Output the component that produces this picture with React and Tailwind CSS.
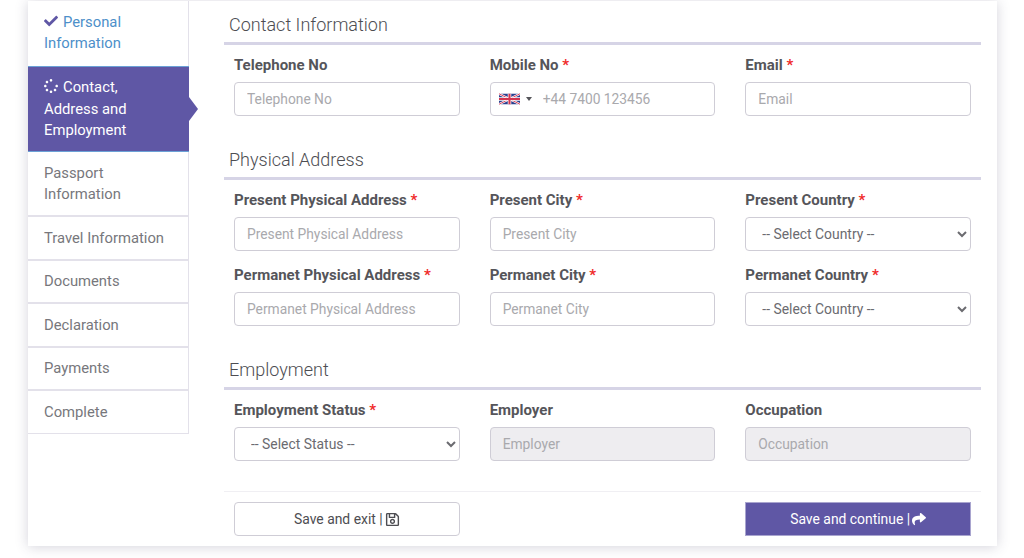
import { FaCheck, FaRegSave, FaShare, FaSpinner } from 'react-icons/fa';

const inputCls = 'w-full h-[34px] rounded border border-[#cfcdd6] px-3 text-[13.8px] text-[#55555a] placeholder:text-[#a9a9ad] outline-none';
const selectCls = 'w-full h-[34px] rounded border border-[#cfcdd6] bg-white px-3 text-[13.9px] text-[#6b6b70] outline-none';

function Flag() {
  return (
    <svg width="21" height="12" viewBox="0 0 60 30" className="shrink-0">
      <rect width="60" height="30" fill="#2b3f8f" />
      <path d="M0 0L60 30M60 0L0 30" stroke="#fff" strokeWidth="6" />
      <path d="M0 0L60 30M60 0L0 30" stroke="#d3344f" strokeWidth="2.5" />
      <path d="M30 0V30M0 15H60" stroke="#fff" strokeWidth="10" />
      <path d="M30 0V30M0 15H60" stroke="#d3344f" strokeWidth="6" />
    </svg>
  );
}

function Field({ label, required, children }) {
  return (
    <div>
      <div className="h-[28px] text-[15px] font-bold leading-[22px] text-[#55555a]">
        {label}{required && <span className="text-[#f02a2a]"> *</span>}
      </div>
      {children}
    </div>
  );
}

function Section({ title, className, children }) {
  return (
    <div className={className}>
      <h2 className="h-[44px] border-b-[3px] border-[#d6d4e6] pl-[5px] pt-[11px] text-[18px] font-light leading-[26px] text-[#4d4d52]">{title}</h2>
      <div className="mt-[9px] grid grid-cols-3 gap-x-[30px] gap-y-[13px] px-[10px]">{children}</div>
    </div>
  );
}

const Text = ({ ph }) => <input className={`${inputCls} bg-white`} placeholder={ph} />;
const Off = ({ ph }) => <input disabled className={`${inputCls} bg-[#eeedf0]`} placeholder={ph} />;
const Select = ({ ph }) => (
  <select className={selectCls} defaultValue="">
    <option value="">{ph}</option>
  </select>
);

const STEPS = [
  ['Passport', 'Information'],
  ['Travel Information'],
  ['Documents'],
  ['Declaration'],
  ['Payments'],
  ['Complete'],
];

export default function App() {
  return (
    <div className="h-[558px] overflow-hidden bg-white pl-[28px] pt-px font-['Roboto',sans-serif]">
      <div className="flex h-[545px] w-[969px] bg-white shadow-[0_1px_12px_rgba(60,55,90,0.22)]">
        <nav className="w-[161px] shrink-0 text-[14.8px] leading-[21.5px] text-[#77777c]">
          <div className="h-[65px] border-r border-[#e3e1ea] px-4 pt-[10.5px] text-[#4d8fc9]">
            <FaCheck className="mr-[5px] inline-block align-[-1px] text-[14px] text-[#5f57a5]" />Personal<br />Information
          </div>
          <div className="relative h-[86px] border-y border-[#6ba1d6] bg-[#5f57a5] px-4 py-[10px] text-white">
            <FaSpinner className="mr-[5px] inline-block align-[-1px] text-[14px]" />Contact,<br />Address and<br />Employment
            <span className="absolute left-full top-[30px] h-0 w-0 border-y-[12px] border-l-[9px] border-y-transparent border-l-[#5f57a5]" />
          </div>
          {STEPS.map((s) => (
            <div key={s[0]} className="border-b-2 border-r border-[#e3e1ea] px-4 pb-[9.5px] pt-[10.5px] last:border-b">
              {s.map((l) => <div key={l}>{l}</div>)}
            </div>
          ))}
        </nav>

        <main className="ml-[35px] w-[757px]">
          <Section title="Contact Information">
            <Field label="Telephone No"><Text ph="Telephone No" /></Field>
            <Field label="Mobile No" required>
              <div className="flex h-[34px] items-center rounded border border-[#cfcdd6] bg-white pl-2">
                <Flag />
                <span className="ml-[6px] h-0 w-0 border-x-[3px] border-t-[4px] border-x-transparent border-t-[#55555a]" />
                <input className="ml-[11px] min-w-0 flex-1 text-[13.8px] outline-none placeholder:text-[#a9a9ad]" placeholder="+44 7400 123456" />
              </div>
            </Field>
            <Field label="Email" required><Text ph="Email" /></Field>
          </Section>

          <Section title="Physical Address" className="mt-[20px]">
            <Field label="Present Physical Address" required><Text ph="Present Physical Address" /></Field>
            <Field label="Present City" required><Text ph="Present City" /></Field>
            <Field label="Present Country" required><Select ph="-- Select Country --" /></Field>
            <Field label="Permanet Physical Address" required><Text ph="Permanet Physical Address" /></Field>
            <Field label="Permanet City" required><Text ph="Permanet City" /></Field>
            <Field label="Permanet Country" required><Select ph="-- Select Country --" /></Field>
          </Section>

          <Section title="Employment" className="mt-[20px]">
            <Field label="Employment Status" required><Select ph="-- Select Status --" /></Field>
            <Field label="Employer"><Off ph="Employer" /></Field>
            <Field label="Occupation"><Off ph="Occupation" /></Field>
          </Section>

          <div className="mt-[30px] grid grid-cols-3 gap-x-[30px] border-t border-[#f0eff3] px-[10px] pt-[10px]">
            <button className="flex h-[34px] items-center justify-center gap-[2px] rounded border border-[#cfcdd6] bg-white text-[13.9px] text-[#4d4d52]">
              Save and exit | <FaRegSave className="text-[15px]" />
            </button>
            <span />
            <button className="flex h-[34px] items-center justify-center gap-[2px] border border-[#a9a5cf] bg-[#5f57a5] text-[13.9px] text-white">
              Save and continue | <FaShare className="text-[14px]" />
            </button>
          </div>
        </main>
      </div>
    </div>
  );
}
